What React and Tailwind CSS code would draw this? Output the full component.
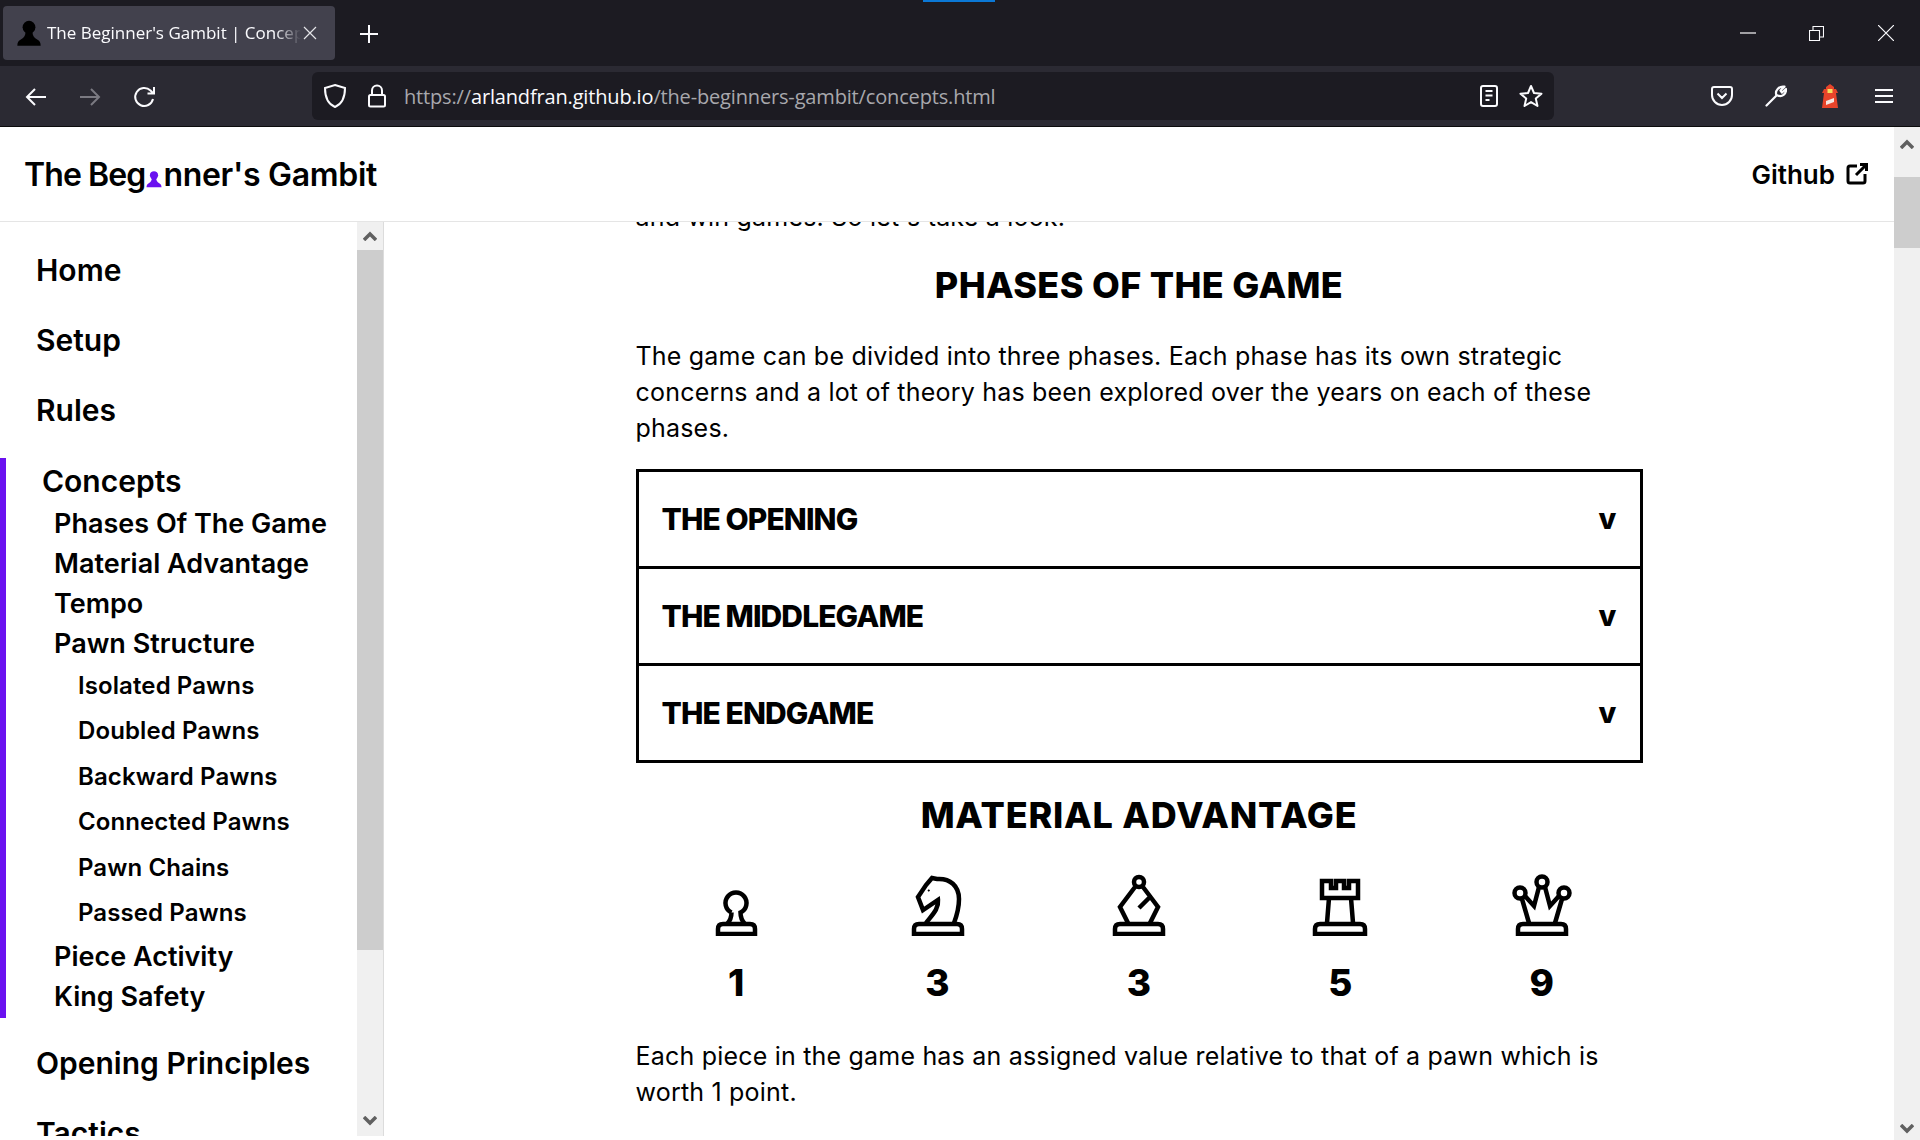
import React from "react";

const poppins = "font-['Inter','Liberation_Sans',sans-serif]";
const ui = "font-['Open_Sans','Noto_Sans',sans-serif]";

const Ico = ({ w, h, vb, cls = "", children }) => (
  <svg width={w} height={h} viewBox={vb || `0 0 ${w} ${h}`} fill="none" stroke="currentColor" className={`shrink-0 ${cls}`}>
    {children}
  </svg>
);

function PawnFill({ size, cls }) {
  return (
    <svg width={size} height={size} viewBox="0 0 24 24" className={cls} fill="currentColor">
      <circle cx="12" cy="7" r="5.5" />
      <path d="M9 11h6c0 3 1 5 4 6.5 2 1 3 2.500 3 5.500H2c0-3 1-4.500 3-5.500 3-1.500 4-3.500 4-6.500z" />
    </svg>
  );
}

const Base = ({ l, r }) => (
  <path d={`M${l} 62 V57 Q${l} 52 ${l + 5} 52 H${r - 5} Q${r} 52 ${r} 57 V62 Z`} />
);

const pieces = [
  { v: "1", d: (
    <>
      <Base l={14} r={51} />
      <path d="M27.500 40.500 A10.500 10.500 0 1 1 36.500 40.500 C36.500 46 38 49 41 52 M27.500 40.500 C27.500 46 26 49 23 52" />
    </>
  ) },
  { v: "3", d: (
    <>
      <Base l={8} r={56} />
      <path d="M20 51 C26 43 33 37 32 28 L17 38 L12 25 L20 13 L26 6 L31 7 C44 6 53 14 53 27 C53 36 51 43 48 51" />
      <path d="M22 19 L23.500 18" strokeWidth="2" />
    </>
  ) },
  { v: "3", d: (
    <>
      <Base l={8} r={56} />
      <circle cx="32" cy="10" r="5" />
      <path d="M28 15 L13 35 L21 51 M36 15 L51 35 L43 51 M43 25 L32 36" />
    </>
  ) },
  { v: "5", d: (
    <>
      <Base l={7} r={57} />
      <path d="M14 26 V9 H23 V16 H28 V9 H36 V16 H41 V9 H50 V26 Z M21 26 L19 51 M43 26 L45 51" />
    </>
  ) },
  { v: "9", d: (
    <>
      <Base l={8} r={56} />
      <circle cx="32" cy="10" r="5.500" />
      <circle cx="10" cy="21" r="5.500" />
      <circle cx="54" cy="21" r="5.500" />
      <path d="M12 27 L19 51 M15 24 L24 34 L29 15 M35 15 L40 34 L49 24 M52 27 L45 51" />
    </>
  ) },
];

const Top = ({ children }) => (
  <div className="h-[70px] flex items-center pl-[36px] text-[30px] leading-none font-semibold whitespace-nowrap">{children}</div>
);
const Sub = ({ children }) => (
  <div className="h-[40px] flex items-center pl-[54px] text-[27px] leading-none font-semibold whitespace-nowrap">{children}</div>
);
const Sub2 = ({ children }) => (
  <div className="h-[45.500px] flex items-center pl-[78px] text-[24px] leading-none font-semibold tracking-[0.1px] whitespace-nowrap">{children}</div>
);

const Row = ({ t, last }) => (
  <div className={`flex items-center justify-between pl-[23px] pr-[23px] ${last ? "h-[94px]" : "border-b-[3px] border-black h-[97px]"}`}>
    <span className="text-[30px] font-extrabold tracking-[-0.9px]">{t}</span>
    <span className="text-[29px] font-extrabold">v</span>
  </div>
);

function Arrow({ dir }) {
  return (
    <svg width="14" height="10" viewBox="0 0 14 10" fill="none" stroke="#606060" strokeWidth="3.500">
      <path d={dir === "up" ? "M1 9 L7 3 L13 9" : "M1 1 L7 7 L13 1"} />
    </svg>
  );
}

export default function App() {
  return (
    <div className={`w-[1920px] h-[1140px] overflow-hidden bg-white text-black flex flex-col ${poppins}`}>
      {/* tab strip */}
      <div className={`h-[66px] bg-[#1c1b22] flex relative text-[#fbfbfe] ${ui}`}>
        <div className="absolute left-[923px] top-0 w-[72px] h-[2px] bg-[#0b78d6]" />
        <div className="ml-[3px] mt-[6px] w-[332px] h-[54px] rounded-[4px] bg-[#42414d] flex items-center pl-[12px]">
          <PawnFill size={28} cls="text-black shrink-0" />
          <span className="ml-[4px] w-[254px] overflow-hidden whitespace-nowrap text-[17px] [mask-image:linear-gradient(to_right,black_90%,transparent)]">The Beginner's Gambit | Concepts</span>
          <Ico w={14} h={14} cls="ml-[2px] text-[#e4e4e8]"><path d="M1 1 L13 13 M13 1 L1 13" strokeWidth="1.200" /></Ico>
        </div>
        <Ico w={20} h={20} cls="ml-[24px] mt-[24px]"><path d="M10 1 V19 M1 10 H19" strokeWidth="2" /></Ico>
        <div className="ml-auto flex items-center h-[66px] pr-[26px]">
          <Ico w={16} h={2}><path d="M0 1 H16" strokeWidth="1.200" /></Ico>
          <Ico w={15} h={15} cls="ml-[53px]"><path d="M.5 4.500 H10.500 V14.500 H.5 Z M4 4.500 V.5 H14.500 V11 H10.500" strokeWidth="1.100" /></Ico>
          <Ico w={16} h={16} cls="ml-[54px]"><path d="M0 0 L16 16 M16 0 L0 16" strokeWidth="1.200" /></Ico>
        </div>
      </div>

      {/* toolbar */}
      <div className="h-[61px] bg-[#2b2a33] border-b border-[#0c0c0d] flex items-center text-[#fbfbfe]">
        <Ico w={22} h={20} cls="ml-[25px] mt-[2px]"><path d="M21 10 H2 M10 2 L2 10 L10 18" strokeWidth="2" /></Ico>
        <Ico w={22} h={20} cls="ml-[32px] mt-[2px] text-[#7b7a82]"><path d="M1 10 H20 M12 2 L20 10 L12 18" strokeWidth="2" /></Ico>
        <Ico w={24} h={24} cls="ml-[32px] mt-[2px]"><path d="M20 14 A9 9 0 1 1 17.500 5.500 L20 8 M21 2 V8.500 H14.500" strokeWidth="2" /></Ico>
        <div className={`ml-[155px] w-[1242px] h-[48px] rounded-[6px] bg-[#1c1b22] flex items-center pl-[11px] ${ui}`}>
          <Ico w={24} h={26}><path d="M12 2 L22 5 C22 14 19 21 12 24 C5 21 2 14 2 5 Z" strokeWidth="2" /></Ico>
          <Ico w={20} h={24} cls="ml-[20px]"><path d="M5 11 V6.500 A5 5 0 0 1 15 6.500 V11 M3.500 11 H16.500 A1.500 1.500 0 0 1 18 12.500 V21 A1.500 1.500 0 0 1 16.500 22.500 H3.500 A1.500 1.500 0 0 1 2 21 V12.500 A1.500 1.500 0 0 1 3.500 11 Z" strokeWidth="2" /></Ico>
          <span className="ml-[17px] mt-[2px] text-[20px] tracking-[-0.16px] text-[#a8a8ad] whitespace-nowrap">https://<span className="text-[#fbfbfe]">arlandfran.github.io</span>/the-beginners-gambit/concepts.html</span>
          <div className="ml-auto flex items-center pr-[11px]">
            <Ico w={18} h={22}><path d="M3 1 H15 A2 2 0 0 1 17 3 V19 A2 2 0 0 1 15 21 H3 A2 2 0 0 1 1 19 V3 A2 2 0 0 1 3 1 Z M5.500 6 H12.500 M5.500 10.500 H12.500 M5.500 15 H9.500" strokeWidth="2" /></Ico>
            <Ico w={24} h={24} cls="ml-[21px]"><path d="M12 2 L15 9 L22.500 9.700 L16.800 14.600 L18.500 22 L12 18.100 L5.500 22 L7.200 14.600 L1.500 9.700 L9 9 Z" strokeWidth="2" strokeLinejoin="round" /></Ico>
          </div>
        </div>
        <Ico w={22} h={20} cls="ml-[157px]"><path d="M3 1 H19 A2 2 0 0 1 21 3 V9 A10 10 0 0 1 1 9 V3 A2 2 0 0 1 3 1 Z M6.500 7.500 L11 12 L15.500 7.500" strokeWidth="2" /></Ico>
        <Ico w={22} h={22} cls="ml-[32px]"><path d="M1.500 20.500 L11.500 10.500 C9.500 5.500 14 .8 19.500 1.700 L15.500 5.500 L17 7.500 L21 4 C21.500 9 17 12.500 12.500 10.500" strokeWidth="2.200" strokeLinecap="round" strokeLinejoin="round" /></Ico>
        <svg width="16" height="24" viewBox="0 0 16 24" className="ml-[35px] shrink-0">
          <path d="M8 0 L12 3 V5 H14 L16 9 H14 L16 24 H0 L2 9 H0 L2 5 H4 V3 Z" fill="#e8442a" />
          <rect x="5.500" y="5" width="5" height="4" fill="#f6e05e" />
          <path d="M4 17 L12 14 V18 L4 21 Z" fill="#f5e6e0" />
        </svg>
        <Ico w={18} h={16} cls="ml-[37px]"><path d="M0 2 H18 M0 8 H18 M0 14 H18" strokeWidth="2" /></Ico>
      </div>

      {/* page */}
      <div className="h-[1013px] flex">
        <div className="flex-1 min-w-0 flex flex-col">
          <header className="h-[95px] shrink-0 border-b border-[#e5e5e5] flex items-center justify-between pl-[24px] pr-[26px] pt-[2px] relative z-10 bg-white">
            <div className="flex items-center text-[32px] font-semibold tracking-[-0.3px] whitespace-nowrap">
              <span className="tracking-[-0.9px]">The Beg</span>
              <PawnFill size={18} cls="text-[#6a11f0] mt-[8px]" />
              <span>nner's Gambit</span>
            </div>
            <div className="flex items-center text-[26px] font-semibold mb-[2px]">
              <span>Github</span>
              <Ico w={22} h={22} cls="ml-[11px] mb-[1px]"><path d="M11 3 H4 A2 2 0 0 0 2 5 V18 A2 2 0 0 0 4 20 H17 A2 2 0 0 0 19 18 V11 M10 12 L20 2 M14 1.500 H20.500 V8" strokeWidth="3" /></Ico>
            </div>
          </header>
          <div className="flex flex-1 min-h-0">
            {/* sidebar */}
            <div className="w-[384px] h-[914px] shrink-0 flex">
              <nav className="w-[357px] overflow-hidden pt-[13px]">
                <Top>Home</Top>
                <Top>Setup</Top>
                <Top>Rules</Top>
                <div className="mt-[13px] h-[560px] border-l-[6px] border-[#6a11f0]">
                  <div className="h-[45px] flex items-center pl-[36px] text-[30px] leading-none font-semibold">Concepts</div>
                  <div className="-ml-[6px]">
                    <Sub>Phases Of The Game</Sub>
                    <Sub>Material Advantage</Sub>
                    <Sub>Tempo</Sub>
                    <Sub>Pawn Structure</Sub>
                    <Sub2>Isolated Pawns</Sub2>
                    <Sub2>Doubled Pawns</Sub2>
                    <Sub2>Backward Pawns</Sub2>
                    <Sub2>Connected Pawns</Sub2>
                    <Sub2>Pawn Chains</Sub2>
                    <Sub2>Passed Pawns</Sub2>
                    <Sub>Piece Activity</Sub>
                    <Sub>King Safety</Sub>
                  </div>
                </div>
                <div className="mt-[10px]" />
                <Top>Opening Principles</Top>
                <Top>Tactics</Top>
              </nav>
              <div className="w-[27px] bg-[#f0f0f0] border-r border-[#dcdcdc] flex flex-col items-center">
                <div className="h-[28px] flex items-center justify-center shrink-0"><Arrow dir="up" /></div>
                <div className="w-full h-[700px] bg-[#cdcdcd] shrink-0" />
                <div className="flex-1 flex items-end justify-center pb-[10px]"><Arrow dir="down" /></div>
              </div>
            </div>
            {/* main */}
            <main className="flex-1 min-w-0 overflow-hidden">
              <div className="w-[1007px] mx-auto text-[25px] leading-[36px] font-normal tracking-[0.2px]">
                <p className="-mt-[23px] whitespace-nowrap">and win games. So let's take a look.</p>
                <h2 className="mt-[28px] text-[36px] leading-[44px] font-extrabold text-center tracking-[0.35px]">PHASES OF THE GAME</h2>
                <p className="mt-[31px]">The game can be divided into three phases. Each phase has its own strategic concerns and a lot of theory has been explored over the years on each of these phases.</p>
                <div className="mt-[23px] border-[3px] border-black">
                  <Row t="THE OPENING" />
                  <Row t="THE MIDDLEGAME" />
                  <Row t="THE ENDGAME" last />
                </div>
                <h2 className="mt-[30px] text-[36px] leading-[44px] font-extrabold text-center tracking-[0.75px]">MATERIAL ADVANTAGE</h2>
                <div className="mt-[35px] grid grid-cols-5 text-center">
                  {pieces.map((p, i) => (
                    <div key={i} className="flex flex-col items-center">
                      <svg width="64" height="64" viewBox="0 0 64 64" fill="none" stroke="#000" strokeWidth="4.500">{p.d}</svg>
                      <div className="mt-[25px] text-[37px] leading-[44px] font-extrabold">{p.v}</div>
                    </div>
                  ))}
                </div>
                <p className="mt-[33px]">Each piece in the game has an assigned value relative to that of a pawn which is worth 1 point.</p>
              </div>
            </main>
          </div>
        </div>
        {/* page scrollbar */}
        <div className="w-[26px] bg-[#f0f0f0] flex flex-col items-center shrink-0">
          <div className="h-[50px] flex items-center justify-center shrink-0 pb-[16px]"><Arrow dir="up" /></div>
          <div className="w-full h-[71px] bg-[#cdcdcd] shrink-0" />
          <div className="flex-1 flex items-end justify-center pb-[6px]"><Arrow dir="down" /></div>
        </div>
      </div>
    </div>
  );
}
